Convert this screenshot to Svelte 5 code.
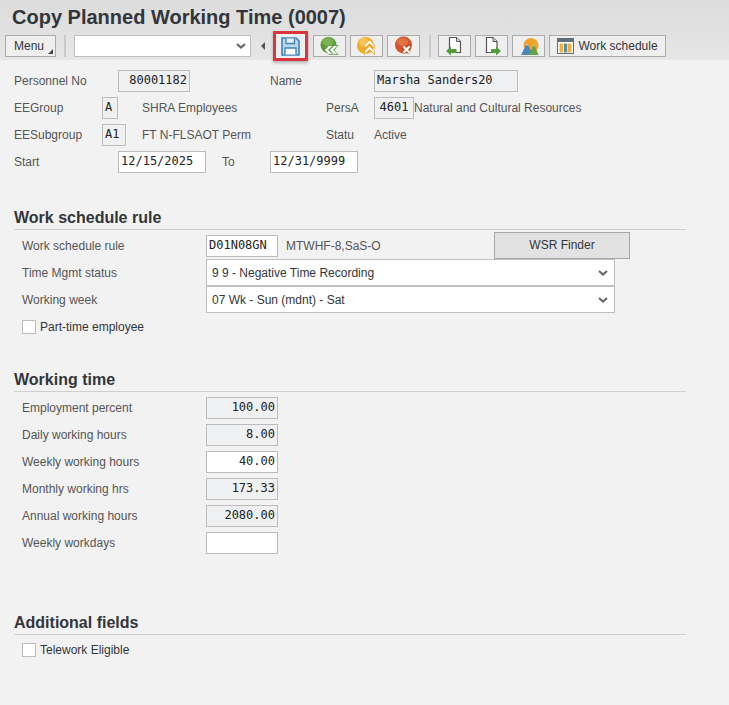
<script>
  const times = [
    { label: 'Employment percent', value: '100.00', ro: true },
    { label: 'Daily working hours', value: '8.00', ro: true },
    { label: 'Weekly working hours', value: '40.00', ro: false },
    { label: 'Monthly working hrs', value: '173.33', ro: true },
    { label: 'Annual working hours', value: '2080.00', ro: true },
    { label: 'Weekly workdays', value: '', ro: false }
  ];
</script>

{#snippet chev()}
  <svg class="chev" width="12" height="8" viewBox="0 0 12 8"><path d="M2 2l4 3.6L10 2" fill="none" stroke="#666" stroke-width="2"/></svg>
{/snippet}

<div class="page">
  <header class="head">
    <h1>Copy Planned Working Time (0007)</h1>
    <div class="toolbar">
      <button class="btn menu">Menu<span class="corner"></span></button>
      <span class="sep"></span>
      <div class="cmd">{@render chev()}</div>
      <svg class="tri" width="6" height="10" viewBox="0 0 6 10"><path d="M5 1v8L1 5z" fill="#555"/></svg>
      <div class="save">
        <svg width="19" height="19" viewBox="0 0 19 19"><path d="M1 1h14l3 3v14H1z" fill="#bcd7ea" stroke="#3f84b8" stroke-width="1.600"/><path d="M5 1.500v5h8.500v-5" fill="#e6f0f7" stroke="#3f84b8" stroke-width="1.300"/><path d="M4 17.500v-6.500h11v6.500" fill="#f7fbfe" stroke="#3f84b8" stroke-width="1.300"/></svg>
      </div>
      <button class="btn ico">
        <svg width="20" height="20" viewBox="0 0 20 20"><circle cx="8.500" cy="9" r="8" fill="#5a9c38"/><ellipse cx="8" cy="6" rx="5.500" ry="4" fill="#86bb5c" opacity=".7"/><path d="M9.500 14L14 9.500h4L13.500 14l4.500 4.500h-4zM4.500 14L9 9.500h4L8.500 14l4.500 4.500H9z" fill="#fff" stroke="#4a8a2c" stroke-width=".7"/></svg>
      </button>
      <button class="btn ico">
        <svg width="20" height="20" viewBox="0 0 20 20"><circle cx="8.500" cy="9.500" r="8.500" fill="#f3ab24"/><ellipse cx="7" cy="6.500" rx="5" ry="4.500" fill="#f9c863" opacity=".8"/><path d="M12.500 4l5 5v3.500l-5-5-5 5V9zM12.500 10l5 5v3.500l-5-5-5 5V15z" fill="#fff" stroke="#dd951a" stroke-width=".7"/></svg>
      </button>
      <button class="btn ico">
        <svg width="20" height="20" viewBox="0 0 20 20"><circle cx="9.500" cy="9" r="8.500" fill="#d2542a"/><ellipse cx="8.500" cy="6" rx="5.500" ry="4" fill="#e47d52" opacity=".7"/><path d="M9.500 10.500l6 6M15.500 10.500l-6 6" stroke="#b8431d" stroke-width="4"/><path d="M9.500 10.500l6 6M15.500 10.500l-6 6" stroke="#fff" stroke-width="2.400"/></svg>
      </button>
      <span class="sep gap"></span>
      <button class="btn ico">
        <svg width="20" height="20" viewBox="0 0 20 20"><path d="M4.500 1.500h7l4 4v11h-11z" fill="#fff" stroke="#555" stroke-width="1.200"/><path d="M11.500 1.500v4h4" fill="#ddd" stroke="#555"/><path d="M6 10.500L1 15l5 4.500V17h5.500v-4H6z" fill="#4f9e3a"/></svg>
      </button>
      <button class="btn ico">
        <svg width="20" height="20" viewBox="0 0 20 20"><path d="M4.500 1.500h6.500l4 4v11H4.500z" fill="#fff" stroke="#555" stroke-width="1.200"/><path d="M11 1.500v4h4" fill="#ddd" stroke="#555"/><path d="M14 10.500l5 4.500-5 4.500V17H9v-4h5z" fill="#4f9e3a"/></svg>
      </button>
      <button class="btn ico">
        <svg width="20" height="20" viewBox="0 0 20 20"><circle cx="12" cy="9.500" r="7.500" fill="#f2a32c"/><path d="M2 19L8 7l6 12z" fill="#4a86b8"/><path d="M10 19l5-11 4.500 11z" fill="#65a544"/><path d="M8 7l1 2.200H7zM15 8l.8 2h-1.600z" fill="#e6f0f7"/></svg>
      </button>
      <button class="btn sched">
        <svg width="17" height="16" viewBox="0 0 17 16"><rect x=".5" y=".5" width="16" height="15" fill="#fff" stroke="#5b6f7d"/><rect x="1" y="1" width="15" height="3" fill="#5b6f7d"/><rect x="2.500" y="5.500" width="3.500" height="9" fill="#f0b23c"/><rect x="6.800" y="5.500" width="3.500" height="9" fill="#5f8aa8"/><rect x="11" y="5.500" width="3.500" height="9" fill="#f0b23c"/></svg>
        Work schedule
      </button>
    </div>
  </header>

  <main class="body">
    <div class="row">
      <span class="lab w104">Personnel No</span>
      <span class="f ro right w72">80001182</span>
      <span class="lab ml80 w104">Name</span>
      <span class="f ro w144">Marsha Sanders20</span>
    </div>
    <div class="row">
      <span class="lab w88">EEGroup</span>
      <span class="f ro w16">A</span>
      <span class="lab txt1">SHRA Employees</span>
      <span class="lab w48">PersA</span>
      <span class="f ro w40 mid">4601</span>
      <span class="lab">Natural and Cultural Resources</span>
    </div>
    <div class="row">
      <span class="lab w88">EESubgroup</span>
      <span class="f ro w24">A1</span>
      <span class="lab txt2">FT N-FLSAOT Perm</span>
      <span class="lab w48">Statu</span>
      <span class="lab">Active</span>
    </div>
    <div class="row">
      <span class="lab w104">Start</span>
      <span class="f w88">12/15/2025</span>
      <span class="lab to">To</span>
      <span class="f w88">12/31/9999</span>
    </div>

    <section class="sec first">
      <h2>Work schedule rule</h2>
      <div class="inner rule-row">
        <span class="lab w184">Work schedule rule</span>
        <span class="f w72">D01N08GN</span>
        <span class="lab desc">MTWHF-8,SaS-O</span>
        <button class="wsr">WSR Finder</button>
      </div>
      <div class="inner sel-row">
        <span class="lab w184">Time Mgmt status</span>
        <div class="sel">9 9 - Negative Time Recording{@render chev()}</div>
      </div>
      <div class="inner sel-row">
        <span class="lab w184">Working week</span>
        <div class="sel">07 Wk - Sun (mdnt) - Sat{@render chev()}</div>
      </div>
      <label class="inner check"><span class="box"></span>Part-time employee</label>
    </section>

    <section class="sec second">
      <h2>Working time</h2>
      {#each times as t}
        <div class="inner time-row">
          <span class="lab w184">{t.label}</span>
          <span class="f w72 right" class:ro={t.ro}>{t.value}</span>
        </div>
      {/each}
    </section>

    <section class="sec third">
      <h2>Additional fields</h2>
      <label class="inner check extra"><span class="box"></span>Telework Eligible</label>
    </section>
  </main>
</div>

<style>
  :global(body) { margin: 0; background: #f2f2f2; }
  .page { width: 729px; height: 705px; overflow: hidden; font-family: "Liberation Sans", Arial, sans-serif; font-size: 12px; color: #32363a; background: #f2f2f2; }
  .head { height: 60px; background: linear-gradient(#dcdcdc, #e6e6e6); border-bottom: 1px solid #e8e8e8; box-sizing: border-box; padding-top: 6px; }
  h1 { margin: 0 0 0 12px; font-size: 20px; line-height: 23px; font-weight: 700; color: #32363a; }
  .toolbar { display: flex; align-items: center; margin-top: 5px; padding-left: 5px; height: 24px; }
  .btn { height: 22px; box-sizing: border-box; border: 1px solid #ababab; background: #efefef; padding: 0; font: inherit; color: #32363a; display: flex; align-items: center; justify-content: center; position: relative; }
  .menu { width: 51px; padding-right: 3px; }
  .corner { position: absolute; right: 2px; bottom: 2px; border-style: solid; border-width: 0 0 5px 5px; border-color: transparent transparent #444 transparent; }
  .sep { width: 2px; height: 22px; background: #c9c9c9; margin: 0 8px 0 8px; }
  .sep.gap { margin: 0 7px 0 5px; }
  .cmd { width: 177px; height: 22px; box-sizing: border-box; border: 1px solid #bfbfbf; background: #fff; display: flex; align-items: center; justify-content: flex-end; padding-right: 3px; }
  .tri { margin: 0 8px 0 9px; }
  .save { width: 35px; height: 30px; box-sizing: border-box; border: 3px solid #d9363e; margin: 0 5px 0 -1px; display: flex; align-items: center; justify-content: center; background: #eceff1; box-shadow: 0 2px 3px rgba(0,0,0,.25); }
  .ico { width: 33px; margin-right: 4px; }
  .sched { width: 117px; gap: 4px; }
  .body { padding: 10px 0 0 14px; }
  .row { display: flex; align-items: center; height: 22px; margin-bottom: 5px; }
  .lab { color: #555; flex: none; line-height: 22px; }
  .f { flex: none; box-sizing: border-box; height: 22px; border: 1px solid #bcbcbc; background: #fff; font-family: "DejaVu Sans Mono", monospace; font-size: 12px; line-height: 19px; padding: 0 2px; color: #222; white-space: pre; }
  .f.ro { background: #eef0f2; }
  .right { text-align: right; }
  .mid { text-align: center; padding: 0 2px; }
  .w16 { width: 16px; } .w24 { width: 24px; } .w40 { width: 40px; } .w48 { width: 48px; } .w72 { width: 72px; } .w88 { width: 88px; } .w104 { width: 104px; } .w144 { width: 144px; } .w184 { width: 184px; }
  .ml80 { margin-left: 80px; }
  .txt1 { margin-left: 24px; width: 184px; }
  .txt2 { margin-left: 16px; width: 184px; }
  .to { margin-left: 16px; width: 48px; }
  .sec { width: 672px; }
  h2 { margin: 0; font-size: 16px; line-height: 19px; font-weight: 700; color: #32363a; height: 22px; box-sizing: border-box; border-bottom: 1px solid #cfcfcf; }
  .first { margin-top: 35px; }
  .second { margin-top: 36px; }
  .third { margin-top: 59px; }
  .inner { margin-left: 8px; display: flex; align-items: center; }
  .rule-row { height: 22px; margin-top: 5px; position: relative; }
  .desc { margin-left: 8px; }
  .wsr { position: absolute; left: 472px; top: -3px; width: 136px; height: 27px; box-sizing: border-box; border: 1px solid #a8a8a8; background: #e2e2e2; font: inherit; color: #32363a; padding: 0 0 2px; }
  .sel-row { height: 27px; }
  .rule-row + .sel-row { margin-top: 2px; }
  .sel { width: 409px; height: 27px; box-sizing: border-box; border: 1px solid #c0c0c0; background: #fff; display: flex; align-items: center; justify-content: space-between; padding: 0 5px 0 5px; color: #32363a; }
  .chev { flex: none; }
  .check { color: #32363a; gap: 4px; height: 14px; margin-top: 7px; }
  .check.extra { margin-top: 8px; }
  .box { width: 14px; height: 14px; box-sizing: border-box; border: 1px solid #bcbcbc; background: #fff; }
  .time-row { height: 22px; margin-top: 5px; }
</style>
